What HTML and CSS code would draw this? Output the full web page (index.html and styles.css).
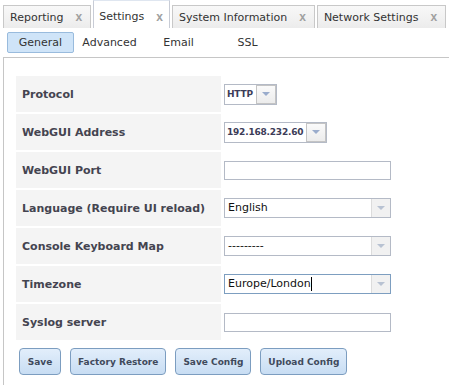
FILE: index.html
```html
<!DOCTYPE html>
<html lang="en">
<head>
    <meta charset="UTF-8">
    <title>Settings</title>
    <link rel="stylesheet" href="styles.css">
</head>
<body>
    <div class="tabs">
        <div class="tab">Reporting <span class="close">x</span></div>
        <div class="tab active">Settings <span class="close">x</span></div>
        <div class="tab">System Information <span class="close">x</span></div>
        <div class="tab">Network Settings <span class="close">x</span></div>
    </div>

    <div class="subtabs">
        <div class="subtab selected">General</div>
        <div class="subtab">Advanced</div>
        <div class="subtab">Email</div>
        <div class="subtab">SSL</div>
    </div>

    <div class="panel">
        <div class="form">
            <div class="row">
                <div class="label">Protocol</div>
                <div class="value">
                    <div class="mini-combo">
                        <span class="mini-text">HTTP</span>
                        <span class="mini-btn"><span class="arrow"></span></span>
                    </div>
                </div>
            </div>
            <div class="row">
                <div class="label">WebGUI Address</div>
                <div class="value">
                    <div class="mini-combo">
                        <span class="mini-text">192.168.232.60</span>
                        <span class="mini-btn"><span class="arrow"></span></span>
                    </div>
                </div>
            </div>
            <div class="row">
                <div class="label">WebGUI Port</div>
                <div class="value"><div class="field"></div></div>
            </div>
            <div class="row">
                <div class="label">Language (Require UI reload)</div>
                <div class="value">
                    <div class="combo">
                        <span class="combo-text">English</span>
                        <span class="combo-btn"><span class="arrow"></span></span>
                    </div>
                </div>
            </div>
            <div class="row">
                <div class="label">Console Keyboard Map</div>
                <div class="value">
                    <div class="combo">
                        <span class="combo-text">---------</span>
                        <span class="combo-btn"><span class="arrow"></span></span>
                    </div>
                </div>
            </div>
            <div class="row">
                <div class="label">Timezone</div>
                <div class="value">
                    <div class="combo focus">
                        <span class="combo-text">Europe/London<span class="caret"></span></span>
                        <span class="combo-btn"><span class="arrow"></span></span>
                    </div>
                </div>
            </div>
            <div class="row">
                <div class="label">Syslog server</div>
                <div class="value"><div class="field"></div></div>
            </div>
        </div>

        <div class="buttons">
            <button class="btn save">Save</button>
            <button class="btn">Factory Restore</button>
            <button class="btn">Save Config</button>
            <button class="btn">Upload Config</button>
        </div>
    </div>
</body>
</html>
```

FILE: styles.css
```css
* {
    margin: 0;
    padding: 0;
    box-sizing: border-box;
    font-family: 'DejaVu Sans', Verdana, sans-serif;
}

body {
    background: white;
    width: 449px;
    height: 385px;
    overflow: hidden;
    font-size: 11px;
    color: #222;
}

/* Top tab strip */
.tabs {
    display: flex;
    align-items: flex-end;
    gap: 2px;
    height: 28px;
    padding-left: 3px;
}

.tab {
    height: 23px;
    display: flex;
    align-items: center;
    gap: 12px;
    padding: 0 8px 0 6px;
    border: 1px solid #c8c8c8;
    border-bottom: none;
    background: linear-gradient(#f8f8f8, #ececec);
    color: #333;
    white-space: nowrap;
}

.tab.active {
    height: 28px;
    padding: 4px 6px 0 5px;
    background: white;
    border-color: #c8ccd6;
    border-top-color: #dfe6f0;
}

.close {
    font-family: 'Liberation Sans', Arial, sans-serif;
    font-weight: bold;
    color: #a0a0a0;
    font-size: 12px;
    line-height: 1;
}

/* Sub tabs */
.subtabs {
    display: flex;
    gap: 2px;
    height: 29px;
    padding: 4px 0 0 7px;
}

.subtab {
    width: 67px;
    height: 21px;
    line-height: 19px;
    text-align: center;
    border: 1px solid transparent;
    color: #333;
}

.subtab.selected {
    background: #cfe4f8;
    border-color: #99bbdd;
    border-radius: 2px;
}

/* Main panel */
.panel {
    border-top: 1px solid #c6c6c6;
    border-left: 1px solid #c6c6c6;
    margin-left: 3px;
    height: 328px;
    padding: 18px 0 0 12px;
}

.row {
    display: grid;
    grid-template-columns: 205px 1fr;
    height: 36px;
    margin-bottom: 2px;
}

.label {
    background: #f4f4f4;
    display: flex;
    align-items: center;
    padding-left: 6px;
    font-weight: bold;
    color: #444450;
}

.value {
    display: flex;
    align-items: center;
    padding-left: 3px;
}

.mini-combo {
    display: flex;
    align-items: center;
    height: 21px;
    border: 1px solid #b4bac6;
    padding: 0 0 0 2px;
}

.mini-text {
    font-size: 9px;
    font-weight: bold;
    color: #3c3c58;
    padding-right: 3px;
    letter-spacing: -0.2px;
}

.mini-btn {
    width: 20px;
    height: 19px;
    border: 1px solid #c4c4c4;
    background: linear-gradient(#fafafa, #ececec);
    display: flex;
    align-items: center;
    justify-content: center;
}

.arrow {
    width: 0;
    height: 0;
    border-left: 4px solid transparent;
    border-right: 4px solid transparent;
    border-top: 4px solid #9aaccc;
}

.field {
    width: 167px;
    height: 19px;
    border: 1px solid #b4bac6;
}

.combo {
    width: 167px;
    height: 20px;
    border: 1px solid #b4bac6;
    display: flex;
}

.combo.focus {
    border-color: #7d9ec0;
}

.combo-text {
    flex: 1;
    padding-left: 3px;
    line-height: 18px;
    color: #111;
    display: flex;
    align-items: center;
}

.caret {
    width: 1px;
    height: 14px;
    background: #000;
}

.combo-btn {
    width: 19px;
    background: #f1f1f1;
    border-left: 1px solid #dcdcdc;
    display: flex;
    align-items: center;
    justify-content: center;
}

.combo-btn .arrow {
    border-top-color: #b8c2d2;
}

/* Buttons */
.buttons {
    display: flex;
    gap: 9px;
    margin-top: 8px;
    padding-left: 3px;
}

.btn {
    height: 27px;
    padding: 0 7px;
    border: 1px solid #7c9dc0;
    border-radius: 4px;
    background: linear-gradient(#e2eefb, #c8ddf3);
    font-size: 9px;
    font-weight: bold;
    color: #404a5c;
    cursor: pointer;
}

.btn.save {
    width: 42px;
    padding: 0;
}
```
